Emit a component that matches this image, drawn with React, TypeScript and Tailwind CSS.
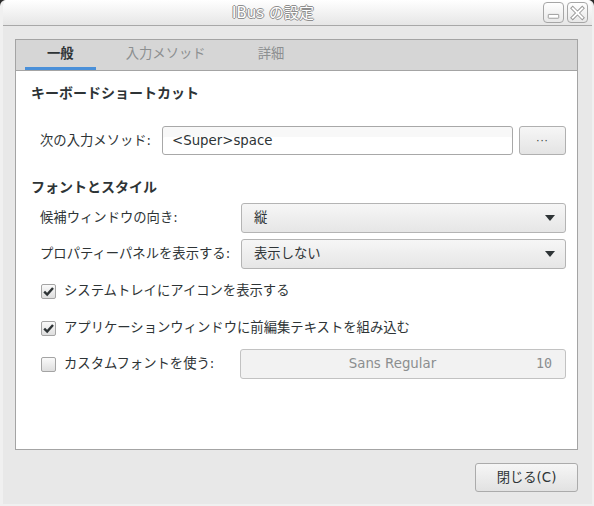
import React, { useState } from 'react';

// IBus preferences dialog (general tab)

const FONT = "font-['DejaVu_Sans','Noto_Sans_CJK_JP',sans-serif]";

type TabId = 'general' | 'engines' | 'advanced';

const TABS: { id: TabId; label: string }[] = [
  { id: 'general', label: '一般' },
  { id: 'engines', label: '入力メソッド' },
  { id: 'advanced', label: '詳細' },
];

// ---------- title bar buttons ----------

const MinimizeIcon = () => (
  <svg width="20" height="20" viewBox="0 0 20 20">
    <rect x="4.5" y="11.5" width="11" height="4" rx="0.5" fill="#fff" stroke="#9a9a9a" />
  </svg>
);

const CloseIcon = () => (
  <svg width="20" height="20" viewBox="0 0 20 20">
    <path d="M5 5 L15 15 M15 5 L5 15" stroke="#9a9a9a" strokeWidth="4" strokeLinecap="square" />
    <path d="M5 5 L15 15 M15 5 L5 15" stroke="#fff" strokeWidth="2" strokeLinecap="square" />
  </svg>
);

const TitleButton: React.FC<{ children: React.ReactNode }> = ({ children }) => (
  <div className="w-[21px] h-[21px] rounded-[4px] border border-[#a6a6a6] bg-gradient-to-b from-[#ffffff] to-[#e8e8e8] flex items-center justify-center">
    {children}
  </div>
);

// ---------- widgets ----------

const ComboArrow = () => (
  <svg width="10" height="6" viewBox="0 0 10 6">
    <path d="M0 0 L10 0 L5 6 Z" fill="#2e3436" />
  </svg>
);

const Combo: React.FC<{ value: string }> = ({ value }) => (
  <div className="flex-1 h-[30px] flex items-center justify-between pl-[12px] pr-[10px] rounded-[3px] border border-[#b4b4b4] bg-gradient-to-b from-[#f6f6f6] to-[#e6e6e6] text-[#2e3436]">
    <span>{value}</span>
    <ComboArrow />
  </div>
);

const CheckBox: React.FC<{ checked: boolean; onToggle: () => void }> = ({ checked, onToggle }) => (
  <button
    onClick={onToggle}
    className="w-[15px] h-[15px] rounded-[2px] border border-[#a4a4a4] bg-gradient-to-b from-[#fafafa] to-[#dedede] flex items-center justify-center shrink-0"
  >
    {checked && (
      <svg width="13" height="13" viewBox="0 0 13 13">
        <path d="M2.2 6.6 L5.2 9.6 L11 3" fill="none" stroke="#2e3436" strokeWidth="2.4" />
      </svg>
    )}
  </button>
);

export default function App() {
  const [tab, setTab] = useState<TabId>('general');
  const [trayIcon, setTrayIcon] = useState(true);
  const [embedPreedit, setEmbedPreedit] = useState(true);
  const [customFont, setCustomFont] = useState(false);

  return (
    <div className={`w-[594px] h-[506px] bg-[#2a2a2a] ${FONT} text-[13.33px] leading-[20px]`}>
      <div className="w-full h-full flex flex-col rounded-t-[6px] overflow-hidden bg-[#e8e8e8] border-l-[3px] border-r-[2px] border-b-[2px] border-[#f0f0f0]">
        {/* title bar */}
        <div className="h-[26px] flex items-center bg-gradient-to-b from-[#ffffff] to-[#e6e6e6] border-b border-[#a8a8a8] shrink-0">
          <div className="flex-1 text-center text-[15px] text-white [text-shadow:-1px_0_#8e8e8e,1px_0_#8e8e8e,0_-1px_#8e8e8e,0_1px_#8e8e8e]">
            IBus の設定
          </div>
          <div className="flex gap-[3px] pr-[4px]">
            <TitleButton>
              <MinimizeIcon />
            </TitleButton>
            <TitleButton>
              <CloseIcon />
            </TitleButton>
          </div>
        </div>

        {/* body */}
        <div className="flex-1 flex flex-col pt-[13px] pl-[12px] pr-[14px] pb-[13px]">
          {/* notebook */}
          <div className="h-[411px] flex flex-col border border-[#a4a4a4]">
            <div className="h-[31px] flex items-end pl-[9px] gap-[8px] bg-[#d6d6d6] border-b border-[#a4a4a4]">
              {TABS.map((t) => (
                <button
                  key={t.id}
                  onClick={() => setTab(t.id)}
                  className={`h-full px-[22px] flex items-center border-b-[3px] ${
                    tab === t.id
                      ? 'border-[#4a90d9] text-[#2e3436] font-bold'
                      : 'border-transparent text-[#8c8f90] font-normal'
                  }`}
                >
                  {t.label}
                </button>
              ))}
            </div>

            <div className="flex-1 bg-white flex flex-col pl-[15px] pr-[11px] text-[#2e3436]">
              <div className="mt-[12px] font-bold text-[14px]">キーボードショートカット</div>

              <div className="mt-[23px] pl-[9px] flex items-center">
                <span className="w-[122px]">次の入力メソッド:</span>
                <div className="w-[351px] h-[29px] flex items-center pl-[9px] rounded-[3px] border border-[#a8a8a8] bg-white shadow-[inset_0_10px_0_#f8f8f8]">
                  &lt;Super&gt;space
                </div>
                <div className="ml-[6px] flex-1 h-[29px] rounded-[3px] border border-[#b0b0b0] bg-gradient-to-b from-[#f6f6f6] to-[#e4e4e4] flex items-center justify-center text-[10px] tracking-[1px]">
                  ···
                </div>
              </div>

              <div className="mt-[22px] font-bold text-[14px]">フォントとスタイル</div>

              <div className="mt-[6px] pl-[9px] flex items-center">
                <span className="w-[201px]">候補ウィンドウの向き:</span>
                <Combo value="縦" />
              </div>
              <div className="mt-[6px] pl-[9px] flex items-center">
                <span className="w-[201px]">プロパティーパネルを表示する:</span>
                <Combo value="表示しない" />
              </div>

              <div className="mt-[12px] pl-[10px] flex items-center gap-[8px]">
                <CheckBox checked={trayIcon} onToggle={() => setTrayIcon(!trayIcon)} />
                <span>システムトレイにアイコンを表示する</span>
              </div>
              <div className="mt-[17px] pl-[10px] flex items-center gap-[8px]">
                <CheckBox checked={embedPreedit} onToggle={() => setEmbedPreedit(!embedPreedit)} />
                <span>アプリケーションウィンドウに前編集テキストを組み込む</span>
              </div>

              <div className="mt-[11px] pl-[10px] flex items-center">
                <CheckBox checked={customFont} onToggle={() => setCustomFont(!customFont)} />
                <span className="ml-[8px] w-[176px]">カスタムフォントを使う:</span>
                <div className="flex-1 h-[30px] flex items-center pl-[8px] pr-[13px] rounded-[3px] border border-[#c2c2c2] bg-[#f2f2f2] text-[#8b8e8f]">
                  <span className="flex-1 text-center">Sans Regular</span>
                  <span className="font-['DejaVu_Sans_Mono',monospace]">10</span>
                </div>
              </div>
            </div>
          </div>

          {/* action area */}
          <div className="mt-[13px] flex justify-end">
            <button className="w-[103px] h-[29px] rounded-[3px] border border-[#ababab] bg-gradient-to-b from-[#f6f6f6] to-[#e2e2e2] text-[#2e3436]">
              閉じる(C)
            </button>
          </div>
        </div>
      </div>
    </div>
  );
}
